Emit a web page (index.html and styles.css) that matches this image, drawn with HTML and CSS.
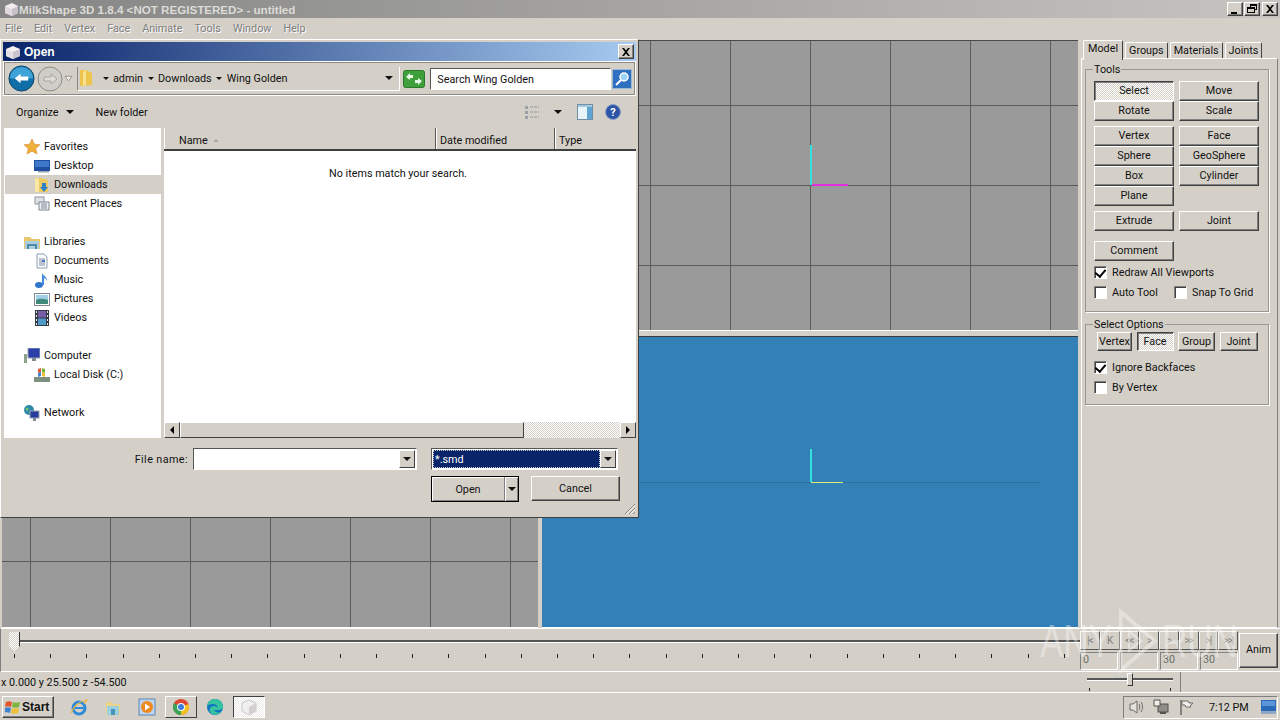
FILE: index.html
```html
<!DOCTYPE html>
<html lang="en">

<head>
  <title>MilkShape 3D 1.8.4</title>
  <meta charset="UTF-8">
  <link rel="stylesheet" href="styles.css">
</head>

<body>
  <div class="app">
    <div class="app-title">
      <svg class="icon16" viewBox="0 0 16 16"><path d="M2 5l7-3 6 3v7l-6 3-7-3z" fill="#f2eeee"/><path d="M9 8l6-3v7l-6 3z" fill="#c9bfc6"/><path d="M2 5l7 3v7l-7-3z" fill="#e0d8dc"/></svg>
      <span class="app-title-text">MilkShape 3D 1.8.4 &lt;NOT REGISTERED&gt; - untitled</span>
      <div class="win-buttons">
        <button class="win-btn"><svg viewBox="0 0 14 12"><path d="M3 9h6v2H3z"/></svg></button>
        <button class="win-btn"><svg viewBox="0 0 14 12"><path d="M5 1h7v6h-2v3H2V4h3zM6 2v2h4v2h1V3H6zM3 6v3h6V6z" /></svg></button>
        <button class="win-btn win-btn-last"><svg viewBox="0 0 14 12"><path d="M3 2h2l2 2.500L9 2h2L8 6l3 4H9L7 7.500 5 10H3l3-4z"/></svg></button>
      </div>
    </div>

    <nav class="menubar">
      <span>File</span><span>Edit</span><span>Vertex</span><span>Face</span><span>Animate</span><span>Tools</span><span>Window</span><span>Help</span>
    </nav>

    <div class="workspace">
      <div class="viewports">
        <div class="viewport"></div>
        <div class="viewport">
          <i class="axis axis-v cyan top-axis-v"></i>
          <i class="axis axis-h magenta top-axis-h"></i>
        </div>
        <div class="viewport"></div>
        <div class="viewport viewport-blue">
          <i class="axis axis-h ground"></i>
          <i class="axis axis-v cyan blue-axis-v"></i>
          <i class="axis axis-h yellow blue-axis-h"></i>
        </div>
      </div>

      <aside class="side-panel">
        <div class="tabs">
          <span class="tab tab-active">Model</span>
          <span class="tab">Groups</span>
          <span class="tab">Materials</span>
          <span class="tab">Joints</span>
        </div>
        <div class="tab-body">
          <fieldset class="group group-tools">
            <legend>Tools</legend>
            <div class="btn-grid">
              <button class="btn btn-pressed">Select</button>
              <button class="btn">Move</button>
              <button class="btn">Rotate</button>
              <button class="btn">Scale</button>
            </div>
            <div class="btn-grid">
              <button class="btn">Vertex</button>
              <button class="btn">Face</button>
              <button class="btn">Sphere</button>
              <button class="btn">GeoSphere</button>
              <button class="btn">Box</button>
              <button class="btn">Cylinder</button>
              <button class="btn">Plane</button>
            </div>
            <div class="btn-grid">
              <button class="btn">Extrude</button>
              <button class="btn">Joint</button>
            </div>
            <div class="btn-grid btn-grid-comment">
              <button class="btn">Comment</button>
            </div>
            <div class="check-row"><span class="check checked"></span>Redraw All Viewports</div>
            <div class="check-row">
              <span class="check"></span><span class="check-label-auto">Auto Tool</span>
              <span class="check"></span><span class="check-label-snap">Snap To Grid</span>
            </div>
          </fieldset>

          <fieldset class="group group-select">
            <legend>Select Options</legend>
            <div class="select-modes">
              <button class="btn">Vertex</button>
              <button class="btn btn-pressed">Face</button>
              <button class="btn">Group</button>
              <button class="btn">Joint</button>
            </div>
            <div class="check-row"><span class="check checked"></span>Ignore Backfaces</div>
            <div class="check-row"><span class="check"></span>By Vertex</div>
          </fieldset>
        </div>
      </aside>
    </div>

    <div class="timeline">
      <div class="track-area">
        <div class="track"></div>
        <div class="track-thumb"></div>
        <div class="track-ticks"></div>
      </div>
      <div class="anim-controls">
        <div class="anim-grid">
          <div class="anim-buttons">
            <span>|&lt;</span><span>K</span><span>&lt;&lt;</span><span>&gt;</span><span>&gt;</span><span>&gt;&gt;</span><span>&gt;|</span><span>&gt;&gt;|</span>
          </div>
          <div class="anim-fields">
            <span>0</span><span></span><span>30</span><span>30</span>
          </div>
        </div>
        <button class="btn anim-btn">Anim</button>
      </div>
    </div>

    <div class="status">
      <span class="coords">x 0.000 y 25.500 z -54.500</span>
      <div class="speed">
        <div class="speed-line"></div>
        <div class="speed-thumb"></div>
        <i class="speed-tick speed-tick-a"></i>
        <i class="speed-tick speed-tick-b"></i>
      </div>
      <div class="status-cell"></div>
    </div>
  </div>

  <!-- Open dialog -->
  <section class="dialog">
    <div class="dialog-title">
      <svg class="icon16" viewBox="0 0 16 16"><path d="M1 5l7-3 7 3v7l-7 3-7-3z" fill="#f4f1f1"/><path d="M8 8l7-3v7l-7 3z" fill="#c8c3cc"/><path d="M1 5l7 3v7l-7-3z" fill="#e4dfe2"/></svg>
      <span>Open</span>
      <button class="win-btn dialog-close"><svg viewBox="0 0 14 12"><path d="M3 2h2l2 2.500L9 2h2L8 6l3 4H9L7 7.500 5 10H3l3-4z"/></svg></button>
    </div>

    <div class="address-bar">
      <svg class="nav-back" viewBox="0 0 28 28"><circle cx="14" cy="14" r="13" fill="#0f6ea8" stroke="#0a3f66"/><path d="M2 14a12 12 0 0 1 24 0z" fill="#3fa3d8"/><path d="M7 14l6-5v3h8v4h-8v3z" fill="#fff"/></svg>
      <svg class="nav-forward" viewBox="0 0 26 26"><circle cx="13" cy="13" r="12" fill="#cfcdc7" stroke="#8d8b86"/><path d="M20 13l-6-5v3H7v4h7v3z" fill="#dedcd7" stroke="#a8a6a1"/></svg>
      <svg class="nav-history" viewBox="0 0 10 8"><path d="M1 1h8L5 6z" fill="#f2f0ec" stroke="#8f8d88"/></svg>
      <div class="breadcrumb">
        <svg class="crumb-folder" viewBox="0 0 14 18"><path d="M1 1h6l6 3v12l-12 1z" fill="#edc44c"/><path d="M7 1v15l-3 1V3z" fill="#f8e28e"/></svg>
        <i class="caret crumb-first"></i><span>admin</span>
        <i class="caret"></i><span>Downloads</span>
        <i class="caret"></i><span>Wing Golden</span>
        <i class="caret crumb-end"></i>
      </div>
      <svg class="go-btn" viewBox="0 0 22 18"><rect x=".5" y=".5" width="21" height="17" rx="2" fill="#3f9f3a" stroke="#2b7a2a"/><path d="M3 7l4-4v2h3v3H7v2zM19 11l-4 4v-2h-3v-3h3V8z" fill="#e9f7e4"/></svg>
      <div class="search-box">Search Wing Golden</div>
      <svg class="search-btn" viewBox="0 0 20 20"><rect x=".5" y=".5" width="19" height="19" rx="1" fill="#2f6fc0" stroke="#9cb9d8"/><circle cx="12" cy="8" r="4" fill="#9cd2f5" stroke="#fff" stroke-width="1.500"/><path d="M9 11l-5 5" stroke="#fff" stroke-width="2"/></svg>
    </div>

    <div class="command-bar">
      <span class="cmd-organize">Organize</span><i class="caret"></i>
      <span class="cmd-new">New folder</span>
      <svg class="cmd-view" viewBox="0 0 18 14"><path d="M2 1h3v3H2zM2 6h3v3H2zM2 11h3v3H2z" fill="#9aa0aa"/><path d="M7 2h9M7 7h9M7 12h9" stroke="#8d929c" stroke-dasharray="3 1"/></svg>
      <i class="caret cmd-view-caret"></i>
      <svg class="cmd-pane" viewBox="0 0 16 16"><rect x=".5" y=".5" width="15" height="15" fill="#e9f3fa" stroke="#6c8fa8"/><rect x="10" y="3" width="5" height="12" fill="#5ea5d2"/><rect x="1" y="1" width="14" height="2" fill="#a8c8de"/></svg>
      <svg class="cmd-help" viewBox="0 0 16 16"><circle cx="8" cy="8" r="7.500" fill="#2e54a8" stroke="#8d9fc8"/><text x="8" y="12" text-anchor="middle" class="help-mark">?</text></svg>
    </div>

    <div class="browser">
      <ul class="nav-pane">
        <li class="nav-head">
          <svg class="icon16" viewBox="0 0 16 16"><path d="M8 0l2.400 5.200 5.600.6-4.200 3.700 1.200 5.500L8 12.200 3 15l1.200-5.500L0 5.800l5.600-.6z" fill="#f0b03c" stroke="#d08a30" stroke-width=".6"/></svg>Favorites</li>
        <li>
          <svg class="icon16" viewBox="0 0 16 16"><rect x="0" y="2" width="16" height="11" fill="#1e4fa0"/><rect x="1" y="3" width="14" height="6" fill="#3f78c8"/><rect x="4" y="13" width="11" height="1.500" fill="#9aa4b2"/></svg>Desktop</li>
        <li class="nav-selected">
          <svg class="icon16" viewBox="0 0 16 16"><path d="M1 1h6l7 2v12H1z" fill="#edca62"/><path d="M1 1l4 1v13H1z" fill="#f8e7a6"/><path d="M8 6h4v4h2l-4 5-4-5h2z" fill="#2f82c6"/></svg>Downloads</li>
        <li>
          <svg class="icon16" viewBox="0 0 16 16"><rect x="1" y="1" width="9" height="7" fill="#dfe3e8" stroke="#8e96a0"/><rect x="5" y="6" width="10" height="8" fill="#eef0f3" stroke="#7f8994"/><path d="M7 8h6M7 10h6M7 12h6" stroke="#7f8994"/></svg>Recent Places</li>
        <li class="nav-head nav-gap">
          <svg class="icon16" viewBox="0 0 16 16"><path d="M0 3h6l2 2h8v10H0z" fill="#e7c770"/><rect x="1" y="7" width="14" height="8" fill="#a9cfe0"/><path d="M4 15v-4h8v4" fill="none" stroke="#4f8ba8" stroke-width="2"/></svg>Libraries</li>
        <li>
          <svg class="icon16" viewBox="0 0 16 16"><path d="M3 1h7l3 3v11H3z" fill="#fafbfd" stroke="#8d9db2"/><path d="M5 6h6M5 8h3M5 10h6M5 12h6" stroke="#7a8aa0"/><rect x="8" y="7" width="3" height="2" fill="#3f78c8"/></svg>Documents</li>
        <li>
          <svg class="icon16" viewBox="0 0 16 16"><ellipse cx="5" cy="13" rx="4" ry="3" fill="#2f78cc"/><path d="M8 13V1c1 3 5 3 5 8-1-2-2-3-3-3v7z" fill="#3f8cdc"/></svg>Music</li>
        <li>
          <svg class="icon16" viewBox="0 0 16 16"><rect x=".5" y="2.500" width="15" height="12" fill="#fff" stroke="#7f8994"/><rect x="2" y="4" width="12" height="5" fill="#9fd0e8"/><path d="M2 9c4-2 8-1 12 0v4H2z" fill="#3f8a7a"/></svg>Pictures</li>
        <li>
          <svg class="icon16" viewBox="0 0 16 16"><rect x="1" y="0" width="14" height="16" fill="#333b44"/><rect x="4" y="1" width="8" height="6.500" fill="#7a5ca8"/><rect x="4" y="8.500" width="8" height="6.500" fill="#4f9ac8"/><path d="M2 1h1v2H2zM2 5h1v2H2zM2 9h1v2H2zM2 13h1v2H2zM13 1h1v2h-1zM13 5h1v2h-1zM13 9h1v2h-1zM13 13h1v2h-1z" fill="#e6e8ea"/></svg>Videos</li>
        <li class="nav-head nav-gap">
          <svg class="icon16" viewBox="0 0 16 16"><rect x="4" y="0" width="12" height="10" fill="#2a3fa8" stroke="#9aa4b2"/><rect x="8" y="10" width="4" height="3" fill="#7f8994"/><rect x="0" y="6" width="3" height="9" fill="#8da08a"/></svg>Computer</li>
        <li>
          <svg class="icon16" viewBox="0 0 16 16"><rect x="0" y="10" width="16" height="5" fill="#7d9080"/><path d="M4 2l3-1v4l-3 1z" fill="#e2552c"/><path d="M8 1l3 1v4l-3-1z" fill="#7ab53c"/><path d="M4 6l3-1v4l-3 1z" fill="#3f84d0"/><path d="M8 5l3 1v4l-3-1z" fill="#efc03a"/></svg>Local Disk (C:)</li>
        <li class="nav-head nav-gap">
          <svg class="icon16" viewBox="0 0 16 16"><circle cx="5" cy="5" r="5" fill="#2f8aa8"/><path d="M2 3c2-1 3 1 2 2S1 6 2 3z" fill="#7bc868"/><rect x="6" y="6" width="9" height="7" fill="#243c9c" stroke="#9aa4b2"/><rect x="9" y="13" width="3" height="3" fill="#7f8994"/></svg>Network</li>
      </ul>

      <div class="list-pane">
        <div class="list-header">
          <span class="col col-name">Name <i class="sort-mark"></i></span>
          <span class="col col-date">Date modified</span>
          <span class="col col-type">Type</span>
        </div>
        <div class="list-body">No items match your search.</div>
        <div class="h-scroll">
          <span class="scroll-arrow"><i class="arrow-left"></i></span>
          <span class="scroll-thumb"></span>
          <span class="scroll-track"></span>
          <span class="scroll-arrow"><i class="arrow-right"></i></span>
        </div>
      </div>
    </div>

    <div class="file-row">
      <label class="file-label">File name:</label>
      <div class="combo combo-name"><span class="combo-text"></span><span class="combo-drop"><i class="caret"></i></span></div>
      <div class="combo combo-filter"><span class="combo-text combo-selected">*.smd</span><span class="combo-drop"><i class="caret"></i></span></div>
    </div>
    <div class="action-row">
      <div class="split-open">
        <span class="split-label">Open</span>
        <span class="split-drop"><i class="caret"></i></span>
      </div>
      <button class="btn-cancel">Cancel</button>
    </div>
    <svg class="grip" viewBox="0 0 12 12"><path d="M11 1L1 11M11 5l-6 6M11 9l-2 2" stroke="#8a8782"/><path d="M11 2.500L2.500 11M11 6.500L6.500 11" stroke="#fff"/></svg>
  </section>

  <footer class="taskbar">
    <button class="start-btn">
      <svg class="icon16" viewBox="0 0 16 16"><path d="M1 3c2-1 4-1 6 0l-1 5c-2-1-4-1-6 0z" fill="#e2552c"/><path d="M8 3c2 1 4 1 7 0l-1 5c-3 1-5 1-7 0z" fill="#7ab53c"/><path d="M0 9c2-1 4-1 6 0l-1 5c-2-1-4-1-6 0z" fill="#3f84d0"/><path d="M7 9c2 1 4 1 7 0l-1 5c-3 1-5 1-7 0z" fill="#efc03a"/></svg>
      Start
    </button>
    <div class="quick-launch">
      <span class="task-item">
        <svg class="task-icon" viewBox="0 0 18 18"><circle cx="9" cy="10" r="6" fill="none" stroke="#2f8ad8" stroke-width="3"/><path d="M4 10h10" stroke="#2f8ad8" stroke-width="2"/><path d="M1 15C4 8 10 3 17 2c-2 2-2 3-3 4" fill="none" stroke="#e8b83a" stroke-width="1.200"/></svg>
      </span>
      <span class="task-item">
        <svg class="task-icon" viewBox="0 0 18 18"><path d="M2 4h6l1 2h7v11H2z" fill="#e9d48a"/><rect x="3" y="8" width="12" height="9" fill="#9cd0e0"/><rect x="7" y="11" width="4" height="6" fill="#4a94b8"/></svg>
      </span>
      <span class="task-item">
        <svg class="task-icon" viewBox="0 0 18 18"><rect x="1" y="1" width="16" height="16" fill="#bcd4ec" stroke="#5e86b8"/><circle cx="9" cy="9" r="6" fill="#ee8a20"/><path d="M7 5.500l5 3.500-5 3.500z" fill="#fff"/></svg>
      </span>
      <span class="task-item task-raised">
        <svg class="task-icon" viewBox="0 0 18 18"><circle cx="9" cy="9" r="8" fill="#e0452f"/><path d="M9 9L16.500 6A8 8 0 0 1 9 17z" fill="#f3c11f"/><path d="M9 9v8A8 8 0 0 1 2 5z" fill="#3aa655"/><circle cx="9" cy="9" r="4" fill="#fff"/><circle cx="9" cy="9" r="3" fill="#3f7de0"/></svg>
      </span>
      <span class="task-item">
        <svg class="task-icon" viewBox="0 0 18 18"><circle cx="9" cy="9" r="8" fill="#1474c4"/><path d="M1 9a8 8 0 0 1 16 0c0 2-2 3-4 3H8c1 2 4 3 7 2-3 4-9 3-11 0-1-2 0-6 4-6 2 0 4 1 4 2 0-2-2-4-5-4-3 0-6 1-6 3z" fill="#35c3a0"/></svg>
      </span>
      <span class="task-item task-active">
        <svg class="task-icon" viewBox="0 0 18 18"><path d="M2 5l7-3 7 3v8l-7 4-7-4z" fill="#f0efef" stroke="#c8c6c6"/><path d="M9 9l7-4v8l-7 4z" fill="#d2d0d2"/></svg>
      </span>
    </div>
    <div class="tray">
      <svg class="tray-icon" viewBox="0 0 16 16"><path d="M2 5h3l4-3v12l-4-3H2z" fill="#e4e2dc" stroke="#6c6a66"/><path d="M11 5c1 2 1 4 0 6M13 3c2 3 2 7 0 10" fill="none" stroke="#6c6a66"/></svg>
      <svg class="tray-icon" viewBox="0 0 16 16"><rect x="5" y="5" width="10" height="8" fill="#8f8d88" stroke="#55534f"/><path d="M1 1h6v6H1z" fill="#f0eee8" stroke="#55534f"/><path d="M7 14h6" stroke="#55534f" stroke-width="2"/></svg>
      <svg class="tray-icon" viewBox="0 0 16 16"><path d="M3 1v15" stroke="#6c6a66" stroke-width="1.500"/><path d="M4 2h6l1 2h4l-3 3 1 1H8L7 6H4z" fill="#f1efe9" stroke="#6c6a66"/></svg>
      <span class="clock">7:12 PM</span>
      <svg class="show-desktop" viewBox="0 0 15 14"><rect width="15" height="11" fill="#2a68b8"/><rect x="1" y="1" width="13" height="5" fill="#5a96d8"/><rect y="11" width="15" height="3" fill="#8fa8c4"/></svg>
    </div>
  </footer>

  <!-- watermark sits over the timeline corner -->
  <div class="watermark">
    <span>ANY</span>
    <svg viewBox="0 0 60 74"><path d="M6 4l50 33-50 33z" fill="none" stroke="#fff" stroke-width="5"/><path d="M18 26l18 11-18 11z" fill="none" stroke="#fff" stroke-width="3"/></svg>
    <span>RUN</span>
  </div>
</body>

</html>
```

FILE: styles.css
```css
:root {
  --face: #d4d0c8;
  --shadow: #808080;
  --dark: #404040;
  --grid-line: #5c5c5c;
}

* {
  box-sizing: border-box;
  margin: 0;
  padding: 0;
}

html,
body {
  width: 1280px;
  height: 720px;
  overflow: hidden;
}

body {
  background: var(--face);
  color: #111;
  font-family: "Roboto", "Liberation Sans", sans-serif;
  font-size: 10.8px;
  display: flex;
  flex-direction: column;
}

button {
  font: inherit;
  color: inherit;
}

i {
  display: block;
}

.icon16 {
  width: 16px;
  height: 16px;
  flex: none;
}

.caret {
  width: 0;
  height: 0;
  border-left: 4px solid transparent;
  border-right: 4px solid transparent;
  border-top: 4px solid #111;
  flex: none;
}

/* main window */
.app {
  height: 693px;
  display: flex;
  flex-direction: column;
}

.app-title {
  height: 18px;
  display: flex;
  align-items: center;
  gap: 0;
  padding-left: 3px;
  background: linear-gradient(to right, #858585, #c6c4c0);
  color: #dddbd6;
  font-family: "Liberation Sans", sans-serif;
  font-size: 11.6px;
  font-weight: bold;
}

.win-buttons {
  margin-left: auto;
  margin-right: 2px;
  display: flex;
  gap: 1px;
}

.win-btn {
  width: 16px;
  height: 14px;
  background: var(--face);
  border: 1px solid;
  border-color: #fff var(--dark) var(--dark) #fff;
  box-shadow: inset -1px -1px var(--shadow);
  display: flex;
  align-items: center;
  justify-content: center;
}

.win-btn svg {
  width: 14px;
  height: 12px;
}

.win-btn-last {
  margin-left: 1px;
}

.menubar {
  height: 20px;
  display: flex;
  align-items: center;
  gap: 12px;
  padding-left: 5px;
  color: #7d7d7d;
  text-shadow: 1px 1px 0 #fff;
  font-size: 10.8px;
}

.workspace {
  flex: 1;
  min-height: 0;
  display: flex;
  padding-top: 2px;
}

.viewports {
  width: 1079px;
  display: grid;
  grid-template-columns: 536px 536px;
  grid-template-rows: 291px 292px;
  column-gap: 4px;
  row-gap: 5px;
  padding-left: 2px;
}

.viewport {
  position: relative;
  background-color: #9a9a9a;
  background-image:
    linear-gradient(to right, var(--grid-line) 1px, transparent 1px),
    linear-gradient(to bottom, var(--grid-line) 1px, transparent 1px);
  background-size: 80px 80px;
  background-position: 28px 64px;
  border-top: 1px solid #4a4a4a;
  border-bottom: 1px solid #fff;
  overflow: hidden;
}

.viewport-blue {
  background: #3380b6;
  border-top: 1px solid #3a3a3a;
}

.axis {
  position: absolute;
}

.axis-v {
  width: 2px;
}

.axis-h {
  height: 1px;
}

.cyan {
  background: #35e0e0;
}

.magenta {
  background: #e030e0;
  height: 2px;
}

.yellow {
  background: #dcf078;
}

.top-axis-v {
  left: 268px;
  top: 104px;
  height: 40px;
}

.top-axis-h {
  left: 270px;
  top: 143px;
  width: 36px;
}

.ground {
  left: 98px;
  top: 145px;
  width: 400px;
  background: #2f6f9e;
}

.blue-axis-v {
  left: 268px;
  top: 112px;
  height: 33px;
}

.blue-axis-h {
  left: 269px;
  top: 145px;
  width: 32px;
}

/* right side panel */
.side-panel {
  flex: 1;
  padding: 0 2px 0 2px;
  display: flex;
  flex-direction: column;
}

.tabs {
  height: 18px;
  display: flex;
  padding-left: 2px;
  gap: 2px;
  align-items: flex-end;
}

.tab {
  height: 16px;
  padding: 0 3px;
  border: 1px solid #fff;
  border-right-color: var(--dark);
  border-bottom: none;
  border-radius: 2px 2px 0 0;
  display: flex;
  align-items: center;
  white-space: nowrap;
}

.tab-active {
  height: 20px;
  position: relative;
  top: 2px;
  z-index: 1;
  background: var(--face);
  padding: 0 4px 4px;
}

.tab-body {
  flex: 1;
  border: 1px solid #fff;
  border-right-color: var(--shadow);
  padding: 4px 0 0 3px;
}

.group {
  width: 184px;
  border: 1px solid #9a9892;
  box-shadow: 1px 1px 0 #fff;
  padding: 0 8px;
}

.group legend {
  margin-left: -1px;
  padding: 0 1px;
  line-height: 13px;
}

.group-tools {
  height: 249px;
  padding-top: 5px;
}

.group-select {
  height: 87px;
  margin-top: 6px;
}

.btn-grid {
  display: grid;
  grid-template-columns: 80px 80px;
  grid-auto-rows: 20px;
  column-gap: 5px;
  margin-bottom: 5px;
}

.btn-grid-comment {
  margin-top: 10px;
  margin-bottom: 1px;
}

.btn {
  background: var(--face);
  border: 1px solid;
  border-color: #fff var(--dark) var(--dark) #fff;
  box-shadow: inset -1px -1px var(--shadow);
  padding-bottom: 1px;
  display: flex;
  align-items: center;
  justify-content: center;
}

.btn-pressed {
  background: repeating-conic-gradient(#fff 0 25%, var(--face) 0 50%) 0 0 / 2px 2px;
  border-color: var(--dark) #fff #fff var(--dark);
  box-shadow: inset 1px 1px var(--shadow);
}

.check-row {
  height: 20px;
  display: flex;
  align-items: center;
  white-space: nowrap;
}

.check {
  width: 13px;
  height: 13px;
  background: #fff;
  border: 1px solid;
  border-color: var(--shadow) #fff #fff var(--shadow);
  box-shadow: inset 1px 1px var(--dark), 1px 1px 0 var(--face);
  margin-right: 5px;
  flex: none;
  position: relative;
}

.checked::after {
  content: "";
  position: absolute;
  left: 2px;
  top: 0;
  width: 5px;
  height: 8px;
  border-right: 2px solid #000;
  border-bottom: 2px solid #000;
  transform: rotate(40deg);
}

.check-label-auto {
  width: 62px;
}

.check-label-snap {
  width: 61px;
  overflow: hidden;
}

.select-modes {
  display: grid;
  grid-template-columns: 35px 37px 37px 38px;
  column-gap: 4.500px;
  margin: 1px 0 6px 3px;
}

.select-modes .btn {
  height: 19px;
}

/* timeline */
.timeline {
  height: 44px;
  display: flex;
  border-top: 1px solid #fff;
  border-bottom: 1px solid #fff;
  border-left: 1px solid var(--shadow);
}

.track-area {
  position: relative;
  width: 1079px;
}

.track {
  position: absolute;
  left: 17px;
  right: 0;
  top: 11px;
  height: 2px;
  background: #555;
  box-shadow: 0 1px 0 #fff;
}

.track-thumb {
  position: absolute;
  left: 8px;
  top: 3px;
  width: 11px;
  height: 20px;
  background: repeating-conic-gradient(#fff 0 25%, var(--face) 0 50%) 0 0 / 2px 2px;
  border-right: 1px solid #333;
  clip-path: polygon(0 0, 100% 0, 100% 70%, 50% 100%, 0 70%);
}

.track-ticks {
  position: absolute;
  left: 13px;
  right: 12px;
  top: 25px;
  height: 4px;
  background: repeating-linear-gradient(to right, #222 0 1px, transparent 1px 36.2px);
}

.anim-controls {
  flex: 1;
  display: flex;
  align-items: center;
  gap: 1px;
  color: #6f6f6a;
}

.anim-grid {
  width: 158px;
  display: flex;
  flex-direction: column;
  gap: 2px;
}

.anim-buttons {
  display: grid;
  grid-template-columns: repeat(8, 1fr);
  height: 19px;
}

.anim-buttons span {
  border: 1px solid;
  border-color: #fff var(--dark) var(--dark) #fff;
  display: flex;
  align-items: center;
  justify-content: center;
  font-size: 10px;
  letter-spacing: -1px;
  opacity: 0.85;
}

.anim-fields {
  display: grid;
  grid-template-columns: repeat(4, 1fr);
  gap: 2px;
  height: 18px;
}

.anim-fields span {
  border: 1px solid;
  border-color: var(--shadow) #fff #fff var(--shadow);
  padding-left: 2px;
}

.anim-btn {
  width: 39px;
  height: 35px;
  color: #111;
}

/* status line */
.status {
  height: 21px;
  display: flex;
  align-items: center;
  border-bottom: 1px solid #fff;
  position: relative;
}

.coords {
  padding-left: 1px;
  width: 1085px;
}

.speed {
  position: relative;
  width: 95px;
  height: 100%;
  flex: none;
}

.speed-line {
  position: absolute;
  left: 2px;
  top: 6px;
  width: 86px;
  height: 2px;
  background: #555;
  box-shadow: 0 1px 0 #fff;
}

.speed-thumb {
  position: absolute;
  left: 42px;
  top: 1px;
  width: 6px;
  height: 13px;
  background: var(--face);
  border: 1px solid;
  border-color: #fff #333 #333 #fff;
}

.speed-tick {
  position: absolute;
  top: 16px;
  width: 1px;
  height: 3px;
  background: #222;
}

.speed-tick-a {
  left: 4px;
}

.speed-tick-b {
  left: 85px;
}

.status-cell {
  flex: 1;
  height: 100%;
  border-left: 1px solid var(--shadow);
}

/* Open dialog */
.dialog {
  position: absolute;
  left: 0;
  top: 39px;
  width: 639px;
  height: 479px;
  background: var(--face);
  border: 1px solid;
  border-color: #fff var(--dark) var(--dark) #fff;
  padding: 2px;
  display: flex;
  flex-direction: column;
}

.dialog-title {
  height: 19px;
  display: flex;
  align-items: center;
  gap: 3px;
  padding-left: 2px;
  background: linear-gradient(to right, #0a246a, #a6caf0);
  color: #fff;
  font-family: "Liberation Sans", sans-serif;
  font-size: 12px;
  font-weight: bold;
}

.dialog-close {
  margin-left: auto;
  margin-right: 2px;
  height: 15px;
  color: #000;
}

.address-bar {
  height: 35px;
  display: flex;
  align-items: center;
  border: 1px solid #fff;
  outline: 1px solid #8b8882;
  outline-offset: -2px;
  padding: 0 3px;
}

.nav-back {
  width: 27px;
  height: 27px;
  flex: none;
  margin-left: 1px;
}

.nav-forward {
  width: 26px;
  height: 26px;
  margin-left: 2px;
  flex: none;
}

.nav-history {
  width: 9px;
  height: 8px;
  margin: 0 4px 0 1px;
  flex: none;
}

.breadcrumb {
  width: 324px;
  height: 24px;
  display: flex;
  align-items: center;
  gap: 4.500px;
  padding-left: 1px;
  border-left: 1px solid #8b8882;
  border-bottom: 1px solid #fff;
  border-right: 1px solid #fff;
}

.breadcrumb .caret {
  border-width: 3px 3px 0;
}

.crumb-folder {
  width: 14px;
  height: 18px;
}

.crumb-first {
  margin-left: 5px;
}

.breadcrumb .crumb-end {
  margin-left: auto;
  margin-right: 6px;
  border-width: 4px 4px 0;
}

.go-btn {
  width: 22px;
  height: 18px;
  margin: 0 5px 0 3px;
  flex: none;
}

.search-box {
  width: 181px;
  height: 22px;
  background: #fff;
  border: 1px solid;
  border-color: #555 #fff #fff #555;
  display: flex;
  align-items: center;
  padding: 1px 0 0 6px;
}

.search-btn {
  width: 20px;
  height: 20px;
  margin-left: 1px;
  flex: none;
}

.command-bar {
  height: 32px;
  display: flex;
  align-items: center;
  padding-left: 13px;
}

.cmd-organize {
  margin-right: 7px;
}

.cmd-new {
  margin-left: 22px;
}

.cmd-view {
  width: 18px;
  height: 14px;
  margin-left: auto;
}

.cmd-view-caret {
  margin: 0 15px 0 13px;
}

.cmd-pane {
  width: 16px;
  height: 16px;
}

.cmd-help {
  width: 16px;
  height: 16px;
  margin: 0 15px 0 12px;
}

.help-mark {
  fill: #fff;
  font-size: 11px;
  font-weight: bold;
}

.browser {
  height: 310px;
  display: flex;
  gap: 3px;
  padding-left: 1px;
}

.nav-pane {
  width: 157px;
  background: #fff;
  list-style: none;
  padding-top: 9px;
}

.nav-pane li {
  height: 19px;
  display: flex;
  align-items: center;
  gap: 4px;
  padding-left: 30px;
  white-space: nowrap;
}

.nav-pane .nav-head {
  padding-left: 20px;
  gap: 4px;
}

.nav-pane .nav-gap {
  margin-top: 19px;
}

.nav-pane .nav-selected {
  background: var(--face);
  margin-left: 1px;
  padding-left: 29px;
}

.list-pane {
  width: 472px;
  display: flex;
  flex-direction: column;
  background: #fff;
}

.list-header {
  height: 23px;
  display: flex;
  background: var(--face);
  border-bottom: 2px solid #404040;
}

.col {
  display: flex;
  align-items: center;
  gap: 5px;
  border-right: 1px solid #555;
  box-shadow: inset 1px 0 #fff;
  padding: 3px 0 0 4px;
}

.col-name {
  width: 272px;
  padding-left: 15px;
}

.col-date {
  width: 119px;
}

.col-type {
  flex: 1;
  border-right: none;
}

.sort-mark {
  width: 0;
  height: 0;
  border-left: 3px solid transparent;
  border-right: 3px solid transparent;
  border-bottom: 3px solid #aaa;
}

.list-body {
  flex: 1;
  text-align: center;
  padding: 16px 4px 0 0;
}

.h-scroll {
  height: 16px;
  display: flex;
}

.scroll-arrow {
  width: 16px;
  background: var(--face);
  border: 1px solid;
  border-color: #fff var(--dark) var(--dark) #fff;
  display: flex;
  align-items: center;
  justify-content: center;
}

.arrow-left {
  border-top: 4px solid transparent;
  border-bottom: 4px solid transparent;
  border-right: 4px solid #000;
}

.arrow-right {
  border-top: 4px solid transparent;
  border-bottom: 4px solid transparent;
  border-left: 4px solid #000;
}

.scroll-thumb {
  width: 344px;
  background: var(--face);
  border: 1px solid;
  border-color: #fff var(--dark) var(--dark) #fff;
}

.scroll-track {
  flex: 1;
  background: repeating-conic-gradient(#fff 0 25%, var(--face) 0 50%) 0 0 / 2px 2px;
}

.file-row {
  display: flex;
  align-items: center;
  margin-top: 10px;
  height: 22px;
}

.file-label {
  width: 185px;
  text-align: right;
  margin-right: 5px;
  letter-spacing: 0.4px;
}

.combo {
  height: 22px;
  display: flex;
  background: #fff;
  border: 1px solid;
  border-color: #555 #fff #fff #555;
  padding: 1px;
}

.combo-name {
  width: 224px;
  margin-right: 14px;
}

.combo-filter {
  width: 187px;
}

.combo-text {
  flex: 1;
  padding-left: 2px;
  display: flex;
  align-items: center;
}

.combo-selected {
  background: #0a246a;
  color: #fff;
  outline: 1px dotted #ccc;
  outline-offset: -1px;
}

.combo-drop {
  width: 16px;
  background: var(--face);
  border: 1px solid;
  border-color: #fff var(--dark) var(--dark) #fff;
  display: flex;
  align-items: center;
  justify-content: center;
}

.action-row {
  display: flex;
  margin: 6px 0 0 428px;
  gap: 12px;
}

.split-open {
  width: 88px;
  height: 26px;
  display: flex;
  border: 1px solid #000;
  background: var(--face);
  box-shadow: inset 1px 1px #fff, inset -1px -1px var(--shadow);
}

.split-label {
  flex: 1;
  display: flex;
  align-items: center;
  justify-content: center;
}

.split-drop {
  width: 14px;
  border-left: 1px solid var(--shadow);
  box-shadow: inset 1px 0 #fff;
  display: flex;
  align-items: center;
  justify-content: center;
}

.btn-cancel {
  width: 89px;
  height: 25px;
  background: var(--face);
  border: 1px solid;
  border-color: #fff var(--dark) var(--dark) #fff;
  box-shadow: inset -1px -1px var(--shadow);
}

.grip {
  position: absolute;
  right: 2px;
  bottom: 2px;
  width: 12px;
  height: 12px;
}

/* taskbar */
.taskbar {
  height: 27px;
  display: flex;
  align-items: center;
  padding: 1px 2px 0;
}

.start-btn {
  width: 52px;
  height: 22px;
  display: flex;
  align-items: center;
  gap: 1px;
  padding-left: 2px;
  background: var(--face);
  border: 1px solid;
  border-color: #fff var(--dark) var(--dark) #fff;
  box-shadow: inset -1px -1px var(--shadow);
  font-family: "Liberation Sans", sans-serif;
  font-size: 12px;
  font-weight: bold;
}

.quick-launch {
  display: flex;
  margin-left: 9px;
  gap: 2px;
}

.task-item {
  width: 32px;
  height: 22px;
  display: flex;
  align-items: center;
  justify-content: center;
}

.task-raised {
  border: 1px solid;
  border-color: #fff var(--dark) var(--dark) #fff;
}

.task-active {
  background: repeating-conic-gradient(#fff 0 25%, #eceae6 0 50%) 0 0 / 2px 2px;
  border: 1px solid;
  border-color: var(--dark) #fff #fff var(--dark);
}

.task-icon {
  width: 18px;
  height: 18px;
}

.tray {
  margin-left: auto;
  width: 155px;
  height: 23px;
  display: flex;
  align-items: center;
  border: 1px solid;
  border-color: var(--shadow) #fff #fff var(--shadow);
  padding-left: 4px;
  gap: 9px;
}

.tray-icon {
  width: 16px;
  height: 16px;
  flex: none;
}

.clock {
  margin-left: 6px;
}

.show-desktop {
  width: 15px;
  height: 14px;
  margin-left: auto;
  margin-right: 1px;
}

/* watermark */
.watermark {
  position: absolute;
  left: 1040px;
  top: 610px;
  display: flex;
  align-items: center;
  gap: 0;
  color: rgba(255, 255, 255, 0.38);
  font-family: "Liberation Sans", sans-serif;
  font-size: 35px;
  line-height: 62px;
  transform: scaleY(1.3);
  pointer-events: none;
}

.watermark svg {
  width: 50px;
  height: 50px;
  opacity: 0.38;
}
```
